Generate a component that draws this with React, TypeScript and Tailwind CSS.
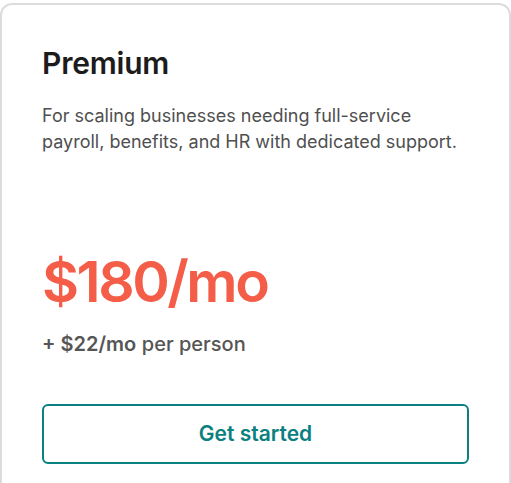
export default function App() {
  return (
    <div className="bg-white min-h-screen pt-[3px] font-['Inter',sans-serif]">
      <div className="border-2 border-[#dcdcdc] rounded-[12px] px-10 pt-[38px] pb-10 h-[520px] flex flex-col">
        <h2 className="text-[30px] leading-[40px] font-semibold text-[#1c1c1c] tracking-[-0.2px]">Premium</h2>
        <p className="mt-[20px] text-[18px] leading-[26px] text-[#4f4f4f]">
          For scaling businesses needing full-service payroll, benefits, and HR with dedicated support.
        </p>
        <div className="mt-[95px] text-[57px] leading-[64px] font-semibold text-[#f45d48] tracking-[-2.5px]">$180/mo</div>
        <div className="mt-[17px] text-[20px] leading-[26px] text-[#555]">
          <span className="font-semibold">+ $22/mo</span> <span className="font-medium">per person</span>
        </div>
        <button className="mt-[47px] h-[60px] w-full border-2 border-[#0a8080] rounded-[6px] text-[21px] font-semibold text-[#0a8080]">
          Get started
        </button>
      </div>
    </div>
  );
}
